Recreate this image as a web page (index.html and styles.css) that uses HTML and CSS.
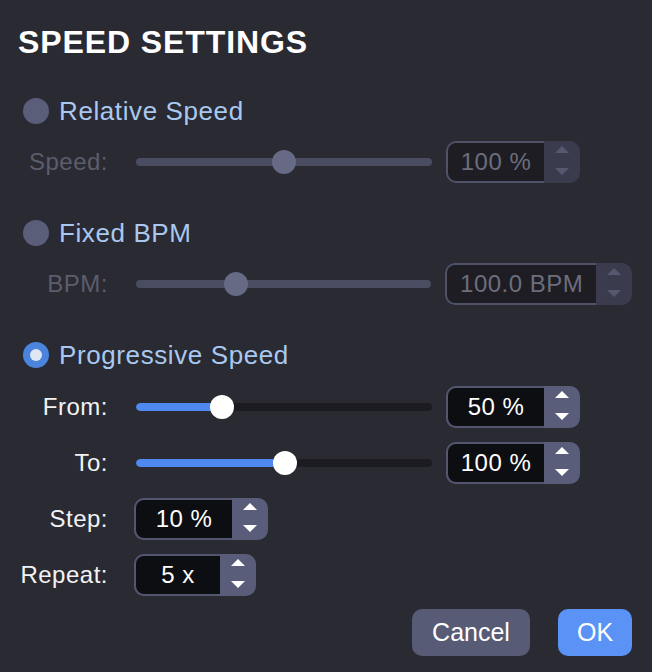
FILE: index.html
```html
<!DOCTYPE html>
<html>
<head>
<meta charset="utf-8">
<link rel="stylesheet" href="styles.css">
</head>
<body>
<div class="dialog">
  <h1 class="title">SPEED SETTINGS</h1>

  <section class="section">
    <div class="radio-row"><span class="radio"></span><span class="radio-label">Relative Speed</span></div>
    <div class="row disabled">
      <span class="label">Speed:</span>
      <div class="slider" style="--v: 50%"><div class="track"><div class="fill"></div></div><div class="thumb"></div></div>
      <div class="spin spin-gap"><div class="field w98">100 %</div><div class="arrows"><svg width="36" height="42" viewBox="0 0 36 42"><polygon points="11,12 25,12 18,5"/><polygon points="11,27 25,27 18,34"/></svg></div></div>
    </div>
  </section>

  <section class="section">
    <div class="radio-row"><span class="radio"></span><span class="radio-label">Fixed BPM</span></div>
    <div class="row disabled">
      <span class="label">BPM:</span>
      <div class="slider" style="--v: 33.8%"><div class="track"><div class="fill"></div></div><div class="thumb"></div></div>
      <div class="spin spin-gap"><div class="field w151">100.0 BPM</div><div class="arrows"><svg width="36" height="42" viewBox="0 0 36 42"><polygon points="11,12 25,12 18,5"/><polygon points="11,27 25,27 18,34"/></svg></div></div>
    </div>
  </section>

  <section class="section">
    <div class="radio-row"><span class="radio checked"></span><span class="radio-label">Progressive Speed</span></div>
    <div class="rows">
      <div class="row">
        <span class="label">From:</span>
        <div class="slider" style="--v: 29%"><div class="track"><div class="fill"></div></div><div class="thumb"></div></div>
        <div class="spin spin-gap"><div class="field w98">50 %</div><div class="arrows"><svg width="36" height="42" viewBox="0 0 36 42"><polygon points="11,12 25,12 18,5"/><polygon points="11,27 25,27 18,34"/></svg></div></div>
      </div>
      <div class="row">
        <span class="label">To:</span>
        <div class="slider" style="--v: 50.3%"><div class="track"><div class="fill"></div></div><div class="thumb"></div></div>
        <div class="spin spin-gap"><div class="field w98">100 %</div><div class="arrows"><svg width="36" height="42" viewBox="0 0 36 42"><polygon points="11,12 25,12 18,5"/><polygon points="11,27 25,27 18,34"/></svg></div></div>
      </div>
      <div class="row">
        <span class="label">Step:</span>
        <div class="spin"><div class="field w98">10 %</div><div class="arrows"><svg width="36" height="42" viewBox="0 0 36 42"><polygon points="11,12 25,12 18,5"/><polygon points="11,27 25,27 18,34"/></svg></div></div>
      </div>
      <div class="row">
        <span class="label">Repeat:</span>
        <div class="spin"><div class="field w86">5 x</div><div class="arrows"><svg width="36" height="42" viewBox="0 0 36 42"><polygon points="11,12 25,12 18,5"/><polygon points="11,27 25,27 18,34"/></svg></div></div>
      </div>
    </div>
  </section>

  <div class="buttons">
    <button class="btn btn-cancel">Cancel</button>
    <button class="btn btn-ok">OK</button>
  </div>
</div>
</body>
</html>
```

FILE: styles.css
```css
* { box-sizing: border-box; }
html, body {
  margin: 0;
  padding: 0;
  background: #2a2a32;
}
body {
  width: 652px;
  height: 672px;
  overflow: hidden;
  font-family: "Liberation Sans", Arial, sans-serif;
  color: #f2f2f4;
}
.dialog {
  padding: 22px 20px 0 18px;
}
.title {
  margin: 0 0 27px 0;
  font-size: 32px;
  line-height: 40px;
  font-weight: 700;
  letter-spacing: 0.9px;
  color: #ffffff;
}
.section {
  margin-bottom: 27px;
}
.section:last-of-type {
  margin-bottom: 0;
}
.radio-row {
  display: flex;
  align-items: center;
  height: 44px;
  padding-left: 5px;
  gap: 10px;
  margin-bottom: 7px;
}
.radio {
  width: 26px;
  height: 26px;
  border-radius: 50%;
  background: #5a5e79;
  display: flex;
  align-items: center;
  justify-content: center;
}
.radio.checked {
  background: #4a84dc;
}
.radio.checked::after {
  content: "";
  width: 12px;
  height: 12px;
  border-radius: 50%;
  background: #dfe7f4;
}
.radio-label {
  font-size: 26px;
  line-height: 26px;
  letter-spacing: 0.6px;
  color: #a9c8f0;
}
.rows {
  display: flex;
  flex-direction: column;
  gap: 12px;
  margin-top: 8px;
}
.row {
  display: flex;
  align-items: center;
  height: 44px;
}
.label {
  width: 90px;
  margin-right: 26px;
  text-align: right;
  font-size: 24px;
  letter-spacing: 0.5px;
  color: #f2f2f4;
}
.slider {
  position: relative;
  width: 296px;
  height: 24px;
  margin: 0 2px;
}
.track {
  position: absolute;
  left: 0;
  right: 0;
  top: 8px;
  height: 8px;
  border-radius: 4px;
  background: #1b1b21;
  overflow: hidden;
}
.fill {
  width: var(--v);
  height: 100%;
  background: #4f89f0;
  border-radius: 4px;
}
.thumb {
  position: absolute;
  top: 0;
  left: calc(var(--v) - 12px);
  width: 24px;
  height: 24px;
  border-radius: 50%;
  background: #ffffff;
}
.spin {
  display: flex;
  height: 42px;
  border-radius: 10px;
  background: #5a5d79;
  overflow: hidden;
}
.spin-gap {
  margin-left: 12px;
}
.field {
  border: 2px solid #53566f;
  border-right: none;
  border-radius: 10px 0 0 10px;
  background: #0d0e12;
  display: flex;
  align-items: center;
  justify-content: center;
  font-size: 24px;
  letter-spacing: 0.5px;
  color: #ffffff;
}
.w98 { width: 98px; }
.w86 { width: 86px; }
.w151 { width: 151px; }
.arrows {
  width: 36px;
  height: 42px;
}
.arrows svg {
  display: block;
  fill: #ffffff;
}

/* disabled state */
.disabled .label { color: #5c5d6c; }
.disabled .track { background: #4a4c61; }
.disabled .fill { background: transparent; }
.disabled .thumb { background: #666a85; }
.disabled .spin { background: #3a3b4c; }
.disabled .field {
  border-color: #50526a;
  background: #1d1d23;
  color: #6c6d7d;
}
.disabled .arrows svg { fill: #55586e; }

.buttons {
  display: flex;
  justify-content: flex-end;
  gap: 28px;
  margin-top: 12px;
}
.btn {
  height: 47px;
  border: none;
  border-radius: 10px;
  font-family: "Liberation Sans", Arial, sans-serif;
  font-size: 25px;
  color: #ffffff;
  padding: 0;
}
.btn-cancel {
  width: 118px;
  background: #575b75;
}
.btn-ok {
  width: 74px;
  background: #5a93f5;
}
```
